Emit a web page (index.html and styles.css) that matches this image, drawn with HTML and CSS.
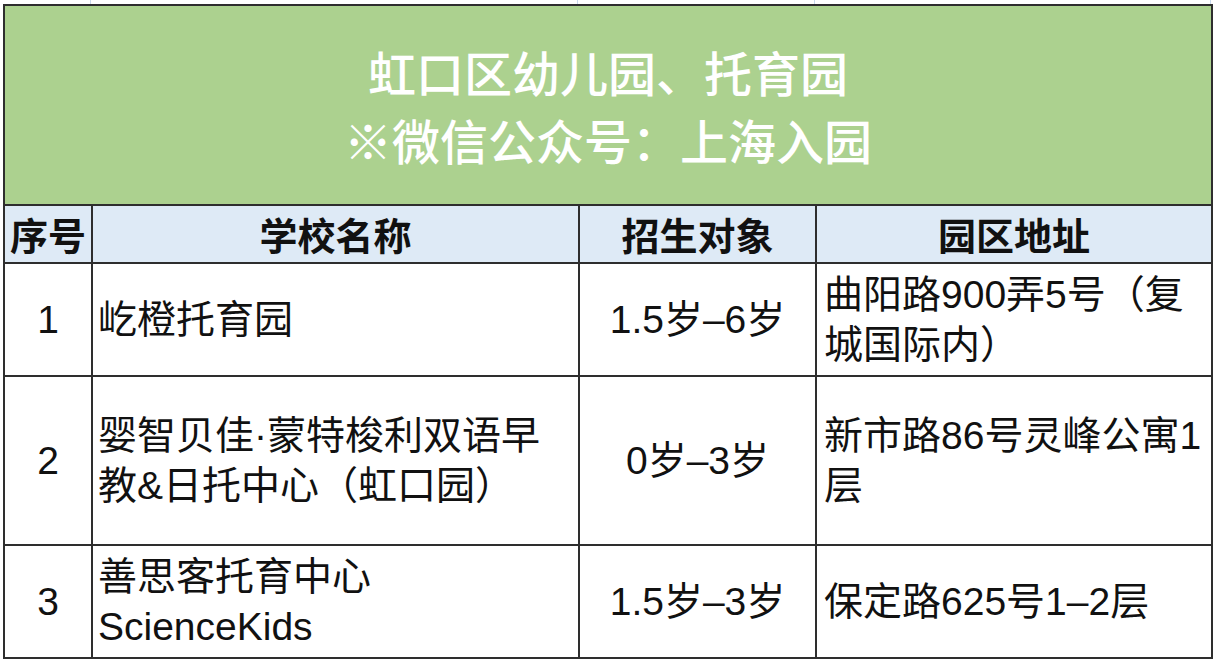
FILE: index.html
```html
<!DOCTYPE html>
<html lang="zh-CN">
<head>
<meta charset="utf-8">
<title>虹口区幼儿园、托育园</title>
<link rel="stylesheet" href="styles.css">
</head>
<body>
<div class="sheet">
  <div class="grid-strip">
    <span class="g g1"></span><span class="g g2"></span><span class="g g3"></span><span class="g g4"></span>
  </div>
  <table class="list">
    <colgroup>
      <col class="c-no"><col class="c-name"><col class="c-age"><col class="c-addr">
    </colgroup>
    <tr class="r-title">
      <td colspan="4" class="title">虹口区幼儿园、托育园<br>※微信公众号：上海入园</td>
    </tr>
    <tr class="r-head">
      <th>序号</th><th>学校名称</th><th>招生对象</th><th>园区地址</th>
    </tr>
    <tr class="r-short">
      <td class="no">1</td>
      <td class="name">屹橙托育园</td>
      <td class="age">1.5岁–6岁</td>
      <td class="addr">曲阳路900弄5号（复<br>城国际内）</td>
    </tr>
    <tr class="r-tall">
      <td class="no">2</td>
      <td class="name">婴智贝佳·蒙特梭利双语早<br>教&amp;日托中心（虹口园）</td>
      <td class="age">0岁–3岁</td>
      <td class="addr">新市路86号灵峰公寓1<br>层</td>
    </tr>
    <tr class="r-short">
      <td class="no">3</td>
      <td class="name">善思客托育中心<br>ScienceKids</td>
      <td class="age">1.5岁–3岁</td>
      <td class="addr">保定路625号1–2层</td>
    </tr>
  </table>
</div>
</body>
</html>
```

FILE: styles.css
```css
html, body {
  margin: 0;
  padding: 0;
  background: #ffffff;
}

body {
  width: 1213px;
  height: 659px;
  overflow: hidden;
  font-family: "Liberation Sans", "Noto Sans CJK SC", sans-serif;
  color: #111111;
}

.sheet {
  padding: 0 2px 0 3px;
}

.grid-strip {
  display: grid;
  grid-template-columns: 88px 487px 237px 396px;
  height: 4px;
}

.g {
  border-right: 1px solid #c9d8ec;
}

.list {
  border-collapse: collapse;
  table-layout: fixed;
  width: 1208px;
}

.c-no { width: 88px; }
.c-name { width: 487px; }
.c-age { width: 237px; }
.c-addr { width: 396px; }

.list td,
.list th {
  border: 2px solid #2e2e2e;
  padding: 0;
  font-size: 39px;
  line-height: 50px;
  vertical-align: middle;
  white-space: nowrap;
}

.r-title { height: 200px; }
.r-head { height: 58px; }
.r-short { height: 113px; }
.r-tall { height: 169px; }

.title {
  background: #acd18f;
  color: #ffffff;
  text-align: center;
}

.list td.title {
  font-size: 48px;
  line-height: 68px;
  font-weight: 500;
  font-family: "Noto Sans CJK SC", sans-serif;
}

.list th {
  background: #deeaf6;
  font-weight: 700;
  font-size: 38px;
  text-align: center;
  font-family: "Noto Sans CJK SC", sans-serif;
}

.no {
  text-align: center;
}

.name {
  text-align: left;
  padding-left: 5px !important;
}

.age {
  text-align: center;
}

.addr {
  text-align: left;
  padding-left: 7px !important;
}
```
